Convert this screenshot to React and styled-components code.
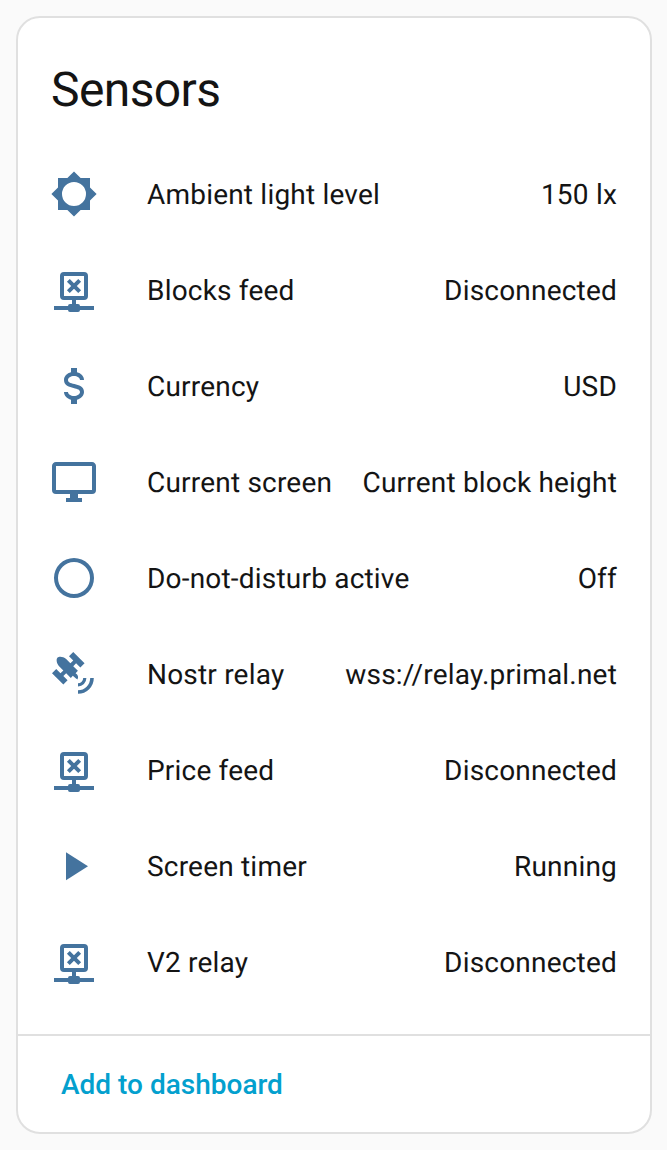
import React from 'react';
import styled, { createGlobalStyle } from 'styled-components';

const GlobalStyle = createGlobalStyle`
  html, body {
    margin: 0;
    padding: 0;
    background: #fafafa;
    text-rendering: geometricPrecision;
  }
`;

const Page = styled.div`
  box-sizing: border-box;
  width: 667px;
  height: 1150px;
  padding: 16px 15px 16px 16px;
  font-family: Roboto, "Liberation Sans", sans-serif;
`;

const Card = styled.div`
  box-sizing: border-box;
  height: 1118px;
  display: flex;
  flex-direction: column;
  background: #fff;
  border: 2px solid #e0e0e0;
  border-radius: 24px;
`;

const Title = styled.h1`
  margin: 0;
  height: 128px;
  padding: 32px 32px 0 33px;
  box-sizing: border-box;
  font-size: 48px;
  font-weight: 400;
  line-height: 80px;
  letter-spacing: -0.6px;
  color: #141414;
`;

const List = styled.div`
  flex: 1;
  display: flex;
  flex-direction: column;
  padding: 0 33px 0 32px;
`;

const Row = styled.div`
  height: 96px;
  display: flex;
  align-items: center;
  font-size: 28px;
  letter-spacing: 0.2px;
  color: #141414;
`;

const Icon = styled.svg`
  width: 48px;
  height: 48px;
  flex: none;
  margin-right: 49px;
  fill: #44739e;
`;

const Name = styled.span`
  flex: 1;
  white-space: nowrap;
`;

const Value = styled.span`
  white-space: nowrap;
`;

const Actions = styled.div`
  height: 98px;
  box-sizing: border-box;
  border-top: 2px solid #e0e0e0;
  padding: 0 16px;
  display: flex;
  align-items: center;
`;

const AddButton = styled.button`
  border: 0;
  background: none;
  padding: 0 27px;
  font-family: inherit;
  font-size: 28px;
  font-weight: 500;
  letter-spacing: 0;
  color: #03a0ce;
`;

const paths = {
  sun: 'M20,15.31L23.31,12L20,8.69V4H15.31L12,0.69L8.69,4H4V8.69L0.69,12L4,15.31V20H8.69L12,23.31L15.31,20H20V15.31M12,18A6,6 0 0,1 6,12A6,6 0 0,1 12,6A6,6 0 0,1 18,12A6,6 0 0,1 12,18Z',
  netOff: 'M15,20A1,1 0 0,0 14,19H13V17H17A2,2 0 0,0 19,15V5A2,2 0 0,0 17,3H7A2,2 0 0,0 5,5V15A2,2 0 0,0 7,17H11V19H10A1,1 0 0,0 9,20H2V22H9A1,1 0 0,0 10,23H14A1,1 0 0,0 15,22H22V20H15M7,15V5H17V15H7M9.88,6.46L12,8.59L14.12,6.46L15.54,7.88L13.41,10L15.54,12.12L14.12,13.54L12,11.41L9.88,13.54L8.46,12.12L10.59,10L8.46,7.88L9.88,6.46Z',
  usd: 'M7,15H9C9,16.08 10.37,17 12,17C13.63,17 15,16.08 15,15C15,13.9 13.96,13.5 11.76,12.97C9.64,12.44 7,11.78 7,9C7,7.21 8.47,5.69 10.5,5.18V3H13.5V5.18C15.53,5.69 17,7.21 17,9H15C15,7.92 13.63,7 12,7C10.37,7 9,7.92 9,9C9,10.1 10.04,10.5 12.24,11.03C14.36,11.56 17,12.22 17,15C17,16.79 15.53,18.31 13.5,18.82V21H10.5V18.82C8.47,18.31 7,16.79 7,15Z',
  monitor: 'M21,16H3V4H21M21,2H3C1.89,2 1,2.89 1,4V16A2,2 0 0,0 3,18H10V20H8V22H16V20H14V18H21A2,2 0 0,0 23,16V4C23,2.89 22.1,2 21,2Z',
  circle: 'M12,20A8,8 0 0,1 4,12A8,8 0 0,1 12,4A8,8 0 0,1 20,12A8,8 0 0,1 12,20M12,2A10,10 0 0,0 2,12A10,10 0 0,0 12,22A10,10 0 0,0 22,12A10,10 0 0,0 12,2Z',
  play: 'M8,5.14V19.14L19,12.14L8,5.14Z',
  satellite: 'M11.62,1L17.28,6.67L15.16,8.79L13.04,6.67L11.62,8.09L13.95,10.41L12.79,11.58C14,12.3 14.4,13.6 13.7,14.7L13,14.3L11.4,12.9L10.41,13.95L8.09,11.62L6.67,13.04L8.79,15.16L6.67,17.28L1,11.62L3.12,9.5L5.24,11.62L6.67,10.2L4.54,8.07C3.2,6.7 3,4.5 3.8,3.8C4.5,3 6.7,3.2 8.07,4.54L10.2,6.67L11.62,5.25L9.5,3.12L11.62,1M14,21.9A7.9,7.9 0 0,0 21.9,14H20.1A6.1,6.1 0 0,1 14,20.1V21.9M14,18.2A4.2,4.2 0 0,0 18.2,14H16.6A2.6,2.6 0 0,1 14,16.6V18.2Z',
};

const rows = [
  ['sun', 'Ambient light level', '150 lx'],
  ['netOff', 'Blocks feed', 'Disconnected'],
  ['usd', 'Currency', 'USD'],
  ['monitor', 'Current screen', 'Current block height'],
  ['circle', 'Do-not-disturb active', 'Off'],
  ['satellite', 'Nostr relay', 'wss://relay.primal.net'],
  ['netOff', 'Price feed', 'Disconnected'],
  ['play', 'Screen timer', 'Running'],
  ['netOff', 'V2 relay', 'Disconnected'],
];

export default function App() {
  return (
    <Page>
      <GlobalStyle />
      <Card>
        <Title>Sensors</Title>
        <List>
          {rows.map(([icon, name, value]) => (
            <Row key={name}>
              <Icon viewBox="0 0 24 24">
                <path d={paths[icon]} />
              </Icon>
              <Name>{name}</Name>
              <Value>{value}</Value>
            </Row>
          ))}
        </List>
        <Actions>
          <AddButton>Add to dashboard</AddButton>
        </Actions>
      </Card>
    </Page>
  );
}
